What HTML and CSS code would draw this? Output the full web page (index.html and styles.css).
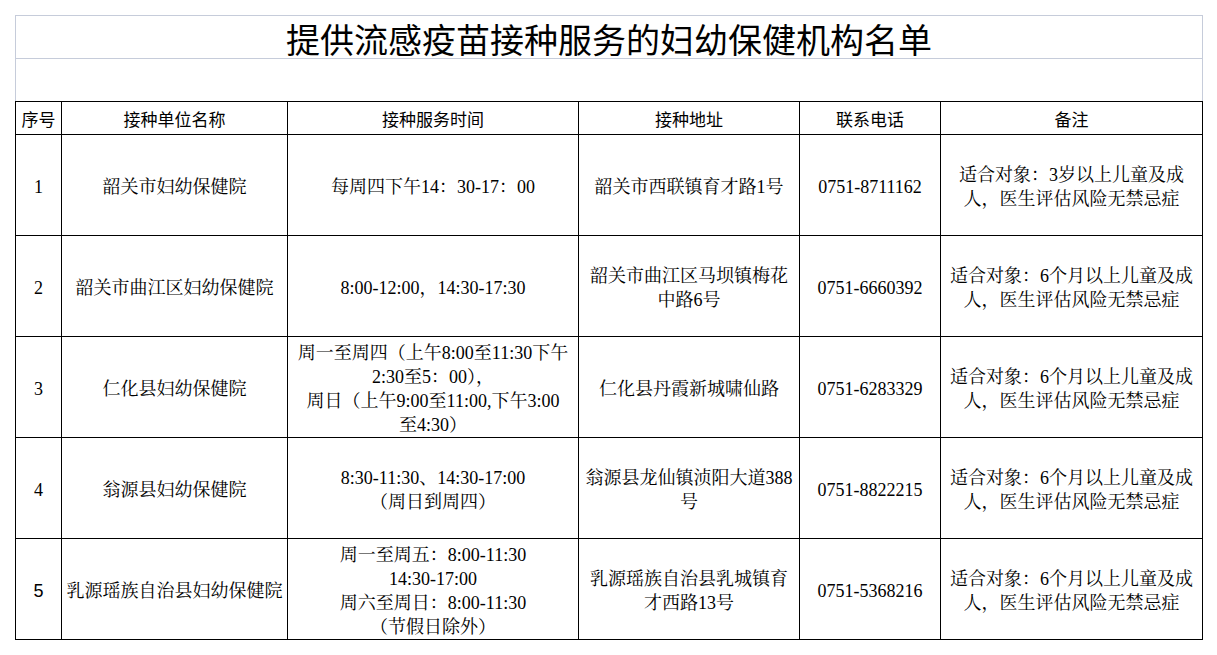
FILE: index.html
```html
<!DOCTYPE html>
<html lang="zh-CN">
<head>
<meta charset="utf-8">
<title>提供流感疫苗接种服务的妇幼保健机构名单</title>
<link rel="stylesheet" href="styles.css">
</head>
<body>
<div class="page">
<table class="sheet">
  <colgroup>
    <col class="c1"><col class="c2"><col class="c3"><col class="c4"><col class="c5"><col class="c6">
  </colgroup>
  <tr class="title-row"><td colspan="6" class="title">提供流感疫苗接种服务的妇幼保健机构名单</td></tr>
  <tr class="blank-row"><td colspan="6" class="blank"></td></tr>
  <tr class="head-row">
    <th>序号</th><th>接种单位名称</th><th>接种服务时间</th><th>接种地址</th><th>联系电话</th><th>备注</th>
  </tr>
  <tr class="data-row">
    <td>1</td>
    <td>韶关市妇幼保健院</td>
    <td>每周四下午14：30-17：00</td>
    <td>韶关市西联镇育才路1号</td>
    <td>0751-8711162</td>
    <td>适合对象：3岁以上儿童及成人，医生评估风险无禁忌症</td>
  </tr>
  <tr class="data-row">
    <td>2</td>
    <td>韶关市曲江区妇幼保健院</td>
    <td>8:00-12:00，14:30-17:30</td>
    <td>韶关市曲江区马坝镇梅花中路6号</td>
    <td>0751-6660392</td>
    <td>适合对象：6个月以上儿童及成人，医生评估风险无禁忌症</td>
  </tr>
  <tr class="data-row">
    <td>3</td>
    <td>仁化县妇幼保健院</td>
    <td>周一至周四（上午8:00至11:30下午<br>2:30至5：00），<br>周日（上午9:00至11:00,下午3:00<br>至4:30）</td>
    <td>仁化县丹霞新城啸仙路</td>
    <td>0751-6283329</td>
    <td>适合对象：6个月以上儿童及成人，医生评估风险无禁忌症</td>
  </tr>
  <tr class="data-row">
    <td>4</td>
    <td>翁源县妇幼保健院</td>
    <td>8:30-11:30、14:30-17:00<br>（周日到周四）</td>
    <td>翁源县龙仙镇浈阳大道388号</td>
    <td>0751-8822215</td>
    <td>适合对象：6个月以上儿童及成人，医生评估风险无禁忌症</td>
  </tr>
  <tr class="data-row last">
    <td class="num-sans">5</td>
    <td>乳源瑶族自治县妇幼保健院</td>
    <td>周一至周五：8:00-11:30<br>14:30-17:00<br>周六至周日：8:00-11:30<br>（节假日除外）</td>
    <td>乳源瑶族自治县乳城镇育才西路13号</td>
    <td>0751-5368216</td>
    <td>适合对象：6个月以上儿童及成人，医生评估风险无禁忌症</td>
  </tr>
</table>
</div>
</body>
</html>
```

FILE: styles.css
```css
html, body {
  margin: 0;
  padding: 0;
  background: #ffffff;
}

.page {
  padding: 15px 0 0 15px;
}

.sheet {
  border-collapse: collapse;
  table-layout: fixed;
  width: 1187px;
  font-family: "Liberation Serif", "Noto Serif CJK SC", "Noto Sans CJK SC", serif;
  font-size: 18px;
  color: #000;
}

.c1 { width: 46px; }
.c2 { width: 226px; }
.c3 { width: 291px; }
.c4 { width: 221px; }
.c5 { width: 141px; }
.c6 { width: 262px; }

.sheet td, .sheet th {
  border: 1px solid #000;
  padding: 4px 4px 0;
  text-align: center;
  vertical-align: middle;
  line-height: 24px;
}

.title-row { height: 43px; }
.blank-row { height: 43px; }
.head-row { height: 33px; }
.data-row { height: 101px; }
.data-row.last { height: 100px; }

.sheet td.title {
  border: 1px solid #c6ccda;
  font-family: "Noto Sans CJK SC", sans-serif;
  font-size: 34px;
  font-weight: 400;
  line-height: 38px;
  padding: 3px 0 0;
  white-space: nowrap;
}

.sheet td.blank {
  border-top: 1px solid #c6ccda;
  border-left: 1px solid #c6ccda;
  border-right: 1px solid #c6ccda;
  border-bottom: 1px solid #000;
  padding: 0;
}

.sheet th {
  font-family: "Noto Sans CJK SC", sans-serif;
  font-size: 17px;
  font-weight: 400;
  padding: 2px 0 0;
  line-height: 22px;
}

.sheet td.num-sans {
  font-family: "Liberation Sans", sans-serif;
}
```
